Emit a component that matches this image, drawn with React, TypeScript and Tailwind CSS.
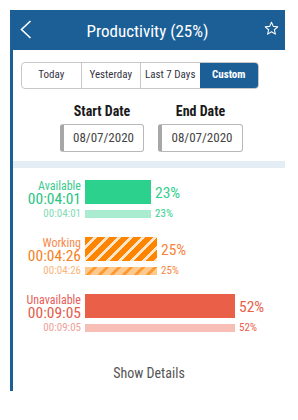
import React from "react";

type Row = {
  label: string;
  time: string;
  pct: number;
  barW: string;
  labelCls: string;
  timeCls: string;
  smallTimeCls: string;
  pctCls: string;
  smallPctCls: string;
  barCls: string;
  lightCls: string;
};

const rows: Row[] = [
  {
    label: "Available",
    time: "00:04:01",
    pct: 23,
    barW: "w-[66px]",
    labelCls: "text-[#3cc98f]",
    timeCls: "text-[#29c483]",
    smallTimeCls: "text-[#7fdcb4]",
    pctCls: "text-[#2fcf8c]",
    smallPctCls: "text-[#2fcf8c]",
    barCls: "bg-[#2bd18d]",
    lightCls: "bg-[#a9ecd0]",
  },
  {
    label: "Working",
    time: "00:04:26",
    pct: 25,
    barW: "w-[72px]",
    labelCls: "text-[#f58a4c]",
    timeCls: "text-[#f5821e]",
    smallTimeCls: "text-[#f9b47c]",
    pctCls: "text-[#f7843a]",
    smallPctCls: "text-[#f7843a]",
    barCls:
      "bg-[repeating-linear-gradient(135deg,#ff8400_0px,#ff8400_6px,#fde6cc_6px,#fde6cc_8.5px)]",
    lightCls:
      "bg-[repeating-linear-gradient(135deg,#ffc88e_0px,#ffc88e_6px,#ff9a30_6px,#ff9a30_8.5px)]",
  },
  {
    label: "Unavailable",
    time: "00:09:05",
    pct: 52,
    barW: "w-[150px]",
    labelCls: "text-[#e8605a]",
    timeCls: "text-[#e35b49]",
    smallTimeCls: "text-[#f0a198]",
    pctCls: "text-[#e8604a]",
    smallPctCls: "text-[#e8604a]",
    barCls: "bg-[#e95f47]",
    lightCls: "bg-[#f6beb4]",
  },
];

function ChartRow({ r }: { r: Row }) {
  return (
    <div className="flex flex-col">
      <div className="flex h-[24px]">
        <div className="w-[68px] flex flex-col items-end">
          <span className={`text-[12px] leading-[12px] ${r.labelCls}`}>{r.label}</span>
          <span className={`text-[15.5px] leading-[14px] ${r.timeCls}`}>{r.time}</span>
        </div>
        <div className={`ml-[4px] h-[24px] ${r.barW} ${r.barCls}`} />
        <span className={`self-end mb-[3px] ml-[4px] text-[15.5px] leading-[15px] ${r.pctCls}`}>
          {r.pct}%
        </span>
      </div>
      <div className="flex items-center h-[8px] mt-[6px]">
        <div className="w-[68px] flex justify-end">
          <span className={`text-[11px] leading-[8px] ${r.smallTimeCls}`}>{r.time}</span>
        </div>
        <div className={`ml-[4px] h-[8px] ${r.barW} ${r.lightCls}`} />
        <span className={`ml-[4px] text-[11px] leading-[8px] ${r.smallPctCls}`}>{r.pct}%</span>
      </div>
    </div>
  );
}

export default function App() {
  const tabs = ["Today", "Yesterday", "Last 7 Days"];
  return (
    <div className="w-[298px] h-[420px] bg-white font-['Roboto',sans-serif] [font-stretch:87%]">
      <div className="pt-[10px] pl-[10px] w-[285px]">
        <div className="h-[40px] bg-[#1c5f97] relative flex items-center justify-center">
          <svg
            className="absolute left-[10px] top-[10px]"
            width="12"
            height="19"
            viewBox="0 0 12 19"
            fill="none"
          >
            <polyline points="10.5,1 1.5,9.5 10.5,18" stroke="white" strokeWidth="1.6" />
          </svg>
          <span className="text-white text-[17px] leading-[20px] mt-[1px]">Productivity (25%)</span>
          <svg
            className="absolute right-[6px] top-[11px]"
            width="15"
            height="15"
            viewBox="0 0 24 24"
            fill="none"
          >
            <polygon
              points="12,2 14.9,8.6 22,9.3 16.6,14 18.2,21 12,17.3 5.8,21 7.4,14 2,9.3 9.1,8.6"
              stroke="white"
              strokeWidth="1.7"
              strokeLinejoin="round"
            />
          </svg>
        </div>
        <div className="border-l-[3px] border-[#1c5f97] h-[341px] flex flex-col">
          <div className="pl-[8px] pt-[12px]">
            <div className="flex w-[238px] h-[27px] border border-[#c8c8c8] rounded-[4px] overflow-hidden">
              {tabs.map((t, i) => (
                <div
                  key={t}
                  className={`flex-1 flex items-center justify-center text-[11px] text-[#353343] ${
                    i > 0 ? "border-l border-[#c8c8c8]" : ""
                  }`}
                >
                  {t}
                </div>
              ))}
              <div className="flex-1 flex items-center justify-center text-[11px] font-bold text-white bg-[#1c5f97]">
                Custom
              </div>
            </div>
          </div>
          <div className="flex gap-[14px] pl-[47px] pt-[14px]">
            {["Start Date", "End Date"].map((l, i) => (
              <div key={l} className={`flex flex-col items-center ${i === 0 ? "w-[84px]" : "w-[85px]"}`}>
                <span className="text-[14px] leading-[17px] font-bold text-[#1a1a1a]">{l}</span>
                <div className="mt-[4px] w-full h-[28px] border border-[#b8b8b8] border-l-[4px] border-l-[#a7a7a9] rounded-[3px] flex items-center justify-center text-[13px] text-[#444]">
                  08/07/2020
                </div>
              </div>
            ))}
          </div>
          <div className="mt-[9px] h-[7px] bg-[#e4ecf4]" />
          <div className="pt-[12px] flex flex-col gap-[19px]">
            {rows.map((r) => (
              <ChartRow key={r.label} r={r} />
            ))}
          </div>
          <div className="mt-[31px] text-center text-[14px] leading-[20px] text-[#555]">Show Details</div>
        </div>
      </div>
    </div>
  );
}
